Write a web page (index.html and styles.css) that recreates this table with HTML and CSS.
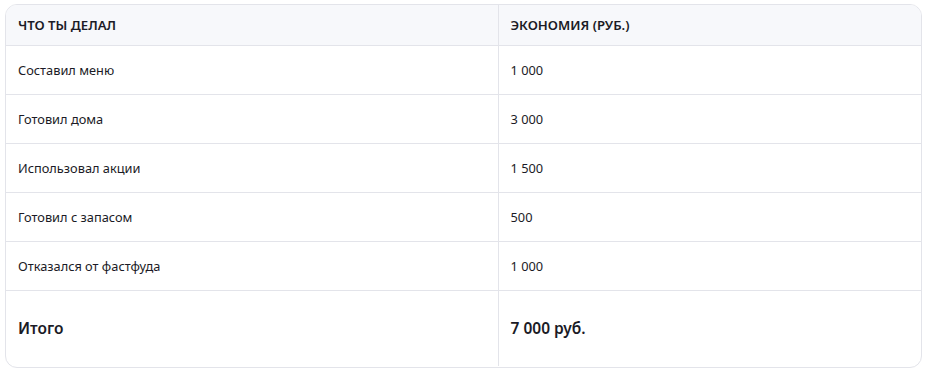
FILE: index.html
```html
<!DOCTYPE html>
<html lang="ru">
<head>
<meta charset="utf-8">
<link rel="stylesheet" href="styles.css">
</head>
<body>
<div class="card">
  <table class="tbl">
    <thead>
      <tr><th class="c1">ЧТО ТЫ ДЕЛАЛ</th><th class="c2">ЭКОНОМИЯ (РУБ.)</th></tr>
    </thead>
    <tbody>
      <tr><td class="c1">Составил меню</td><td class="c2">1 000</td></tr>
      <tr><td class="c1">Готовил дома</td><td class="c2">3 000</td></tr>
      <tr><td class="c1">Использовал акции</td><td class="c2">1 500</td></tr>
      <tr><td class="c1">Готовил с запасом</td><td class="c2">500</td></tr>
      <tr><td class="c1">Отказался от фастфуда</td><td class="c2">1 000</td></tr>
      <tr class="total"><td class="c1">Итого</td><td class="c2">7 000 руб.</td></tr>
    </tbody>
  </table>
</div>
</body>
</html>
```
FILE: styles.css
```css
html, body {
  margin: 0;
  padding: 0;
  background: #ffffff;
}
body {
  padding: 4px 5px 3px 5px;
  font-family: "Noto Sans", "Open Sans", sans-serif;
  color: #1b1b26;
}
.card {
  border: 1px solid #e3e4ea;
  border-radius: 12px;
  overflow: hidden;
  height: 362px;
}
.tbl {
  width: 100%;
  border-collapse: collapse;
  table-layout: fixed;
}
.tbl .c1 {
  width: 492px;
  border-right: 1px solid #e3e4ea;
}
.tbl th {
  background: #f7f8fb;
  font-size: 13.2px;
  font-weight: 600;
  text-align: left;
  height: 40px;
  padding: 0 12px;
  border-bottom: 1px solid #e3e4ea;
  box-sizing: border-box;
}
.tbl td {
  font-size: 12.8px;
  font-weight: 400;
  height: 49px;
  padding: 0 12px;
  border-bottom: 1px solid #e3e4ea;
  box-sizing: border-box;
}
.tbl .total td {
  height: 76px;
  border-bottom: none;
  font-size: 15.5px;
  font-weight: 600;
}
.tbl th.c2, .tbl td.c2 {
  border-right: none;
}
```
